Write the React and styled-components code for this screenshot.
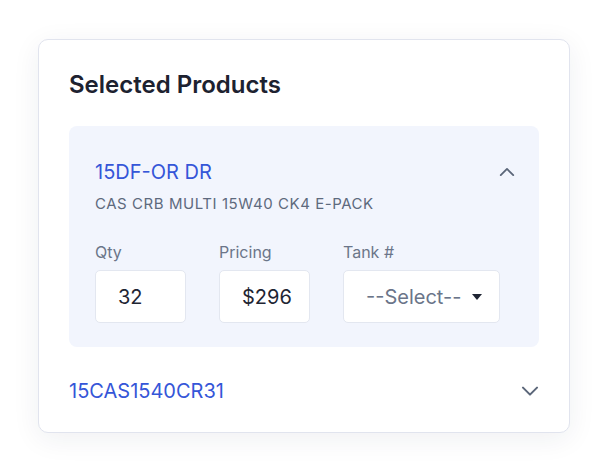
import React from "react";
import styled, { createGlobalStyle } from "styled-components";

const GlobalStyle = createGlobalStyle`
  body {
    margin: 0;
    background: #ffffff;
    font-family: Inter, "Noto Sans", "Liberation Sans", sans-serif;
  }
`;

const Page = styled.div`
  padding: 39px 38px;
`;

const Card = styled.div`
  width: 532px;
  box-sizing: border-box;
  background: #fff;
  border: 1px solid #e1e4ee;
  border-radius: 10px;
  box-shadow: 0 6px 28px rgba(30, 40, 70, 0.07);
  padding: 30px 30px 28px 30px;
`;

const Title = styled.h2`
  margin: 0 0 26px;
  font-size: 24px;
  line-height: 30px;
  font-weight: 600;
  color: #1d2230;
`;

const Panel = styled.div`
  background: #f2f5fd;
  border-radius: 8px;
  padding: 33px 24px 24px 26px;
`;

const Header = styled.div`
  display: flex;
  align-items: center;
  justify-content: space-between;
`;

const Sku = styled.div`
  font-size: 20px;
  line-height: 26px;
  color: #3556d8;
`;

const Desc = styled.div`
  margin-top: 9px;
  font-size: 15px;
  line-height: 20px;
  color: #5e6a7e;
  letter-spacing: 0.55px;
`;

const Fields = styled.div`
  display: flex;
  gap: 33px;
  margin-top: 28px;
`;

const Field = styled.div`
  display: flex;
  flex-direction: column;
  gap: 8px;
`;

const Label = styled.div`
  font-size: 16px;
  line-height: 20px;
  color: #6b7589;
`;

const Box = styled.div`
  width: ${(p) => p.$w}px;
  height: 53px;
  box-sizing: border-box;
  background: #fff;
  border: 1px solid #e3e7f0;
  border-radius: 5px;
  display: flex;
  align-items: center;
  justify-content: space-between;
  padding: 0 17px 0 22px;
  font-size: 20px;
  color: ${(p) => (p.$muted ? "#6b7589" : "#1f2533")};
`;

const Caret = styled.span`
  width: 0;
  height: 0;
  border-left: 5px solid transparent;
  border-right: 5px solid transparent;
  border-top: 6px solid #1f2533;
`;

const Row = styled.div`
  display: flex;
  align-items: center;
  justify-content: space-between;
  margin-top: 31px;
`;

const Chevron = ({ up, w = 15 }) => (
  <svg width={w} height={w * 0.6} viewBox="0 0 16 10" fill="none">
    <path
      d={up ? "M1.5 8.5 L8 2 L14.5 8.5" : "M1.5 1.5 L8 8 L14.5 1.5"}
      stroke="#5b6679"
      strokeWidth="1.9"
      strokeLinecap="round"
      strokeLinejoin="round"
    />
  </svg>
);

export default function App() {
  return (
    <Page>
      <GlobalStyle />
      <Card>
        <Title>Selected Products</Title>
        <Panel>
          <Header>
            <Sku>15DF-OR DR</Sku>
            <Chevron up w={16} />
          </Header>
          <Desc>CAS CRB MULTI 15W40 CK4 E-PACK</Desc>
          <Fields>
            <Field>
              <Label>Qty</Label>
              <Box $w={91}>32</Box>
            </Field>
            <Field>
              <Label>Pricing</Label>
              <Box $w={91}>$296</Box>
            </Field>
            <Field>
              <Label>Tank #</Label>
              <Box $w={157} $muted>
                --Select--
                <Caret />
              </Box>
            </Field>
          </Fields>
        </Panel>
        <Row>
          <Sku>15CAS1540CR31</Sku>
          <Chevron w={18} />
        </Row>
      </Card>
    </Page>
  );
}
